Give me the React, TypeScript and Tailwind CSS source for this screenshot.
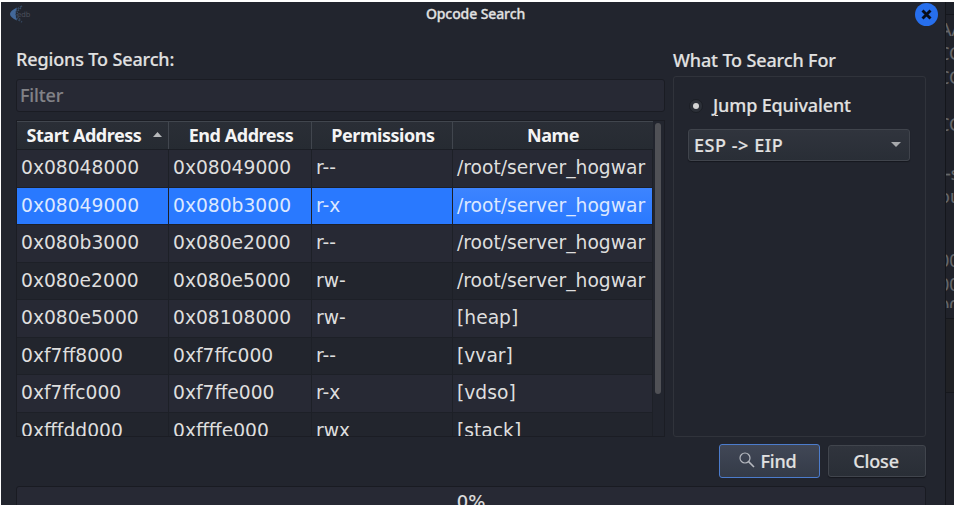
import type { ReactNode } from "react";

const regions = [
  ["0x08048000", "0x08049000", "r--", "/root/server_hogwar"],
  ["0x08049000", "0x080b3000", "r-x", "/root/server_hogwar"],
  ["0x080b3000", "0x080e2000", "r--", "/root/server_hogwar"],
  ["0x080e2000", "0x080e5000", "rw-", "/root/server_hogwar"],
  ["0x080e5000", "0x08108000", "rw-", "[heap]"],
  ["0xf7ff8000", "0xf7ffc000", "r--", "[vvar]"],
  ["0xf7ffc000", "0xf7ffe000", "r-x", "[vdso]"],
  ["0xfffdd000", "0xffffe000", "rwx", "[stack]"],
];
const selected = 1;
const columns = "grid grid-cols-[152px_143px_141px_200px]";

function Logo() {
  return (
    <svg className="mt-[3px] ml-[8px] h-[18px] w-[22px]" viewBox="0 0 22 18" fill="none">
      <path d="M13 1Q-1 9 13 17" stroke="#34475f" strokeWidth="1.8" strokeDasharray="2 1" />
      <path d="M8 2.5Q-6 9 8 15.5Q5 9 8 2.5Z" fill="#42689a" />
      <path d="M12 3Q4 9 12 15" stroke="#3b4d64" strokeWidth="1.2" strokeDasharray="1.5 1" />
      <text x="8" y="11.5" fill="#4b505b" fontSize="7.2" fontFamily="DejaVu Sans">edb</text>
    </svg>
  );
}

function HeaderCell({ children, last }: { children: ReactNode; last?: boolean }) {
  return (
    <div className={`flex items-center justify-center ${last ? "" : "border-r border-[#41464e]"}`}>{children}</div>
  );
}

function RegionsTable() {
  return (
    <div className="mt-[8px] flex h-[317px] w-[649px] overflow-hidden border border-[#1b1d24] bg-[#22252e]">
      <div className="w-[636px] shrink-0">
        <div className={`${columns} h-[29px] border-t border-b border-t-[#41464e] border-b-[#1b1e25] bg-linear-to-b from-[#2a2e36] to-[#262b32] font-['Noto_Sans',sans-serif] text-[18px] font-bold tracking-[-0.45px] text-[#f4f4f4]`}>
          <HeaderCell>
            <span className="mr-[12px] ml-[4px]">Start Address</span>
            <svg className="mb-[3px] h-[5px] w-[9px]" viewBox="0 0 9 5"><path d="M0 5L4.5 0L9 5Z" fill="#b7b9bb" /></svg>
          </HeaderCell>
          <HeaderCell><span className="ml-[2px]">End Address</span></HeaderCell>
          <HeaderCell><span className="ml-[2px]">Permissions</span></HeaderCell>
          <HeaderCell last>Name</HeaderCell>
        </div>
        {regions.map((row, i) => (
          <div key={i} className={`${columns} h-[37.5px] font-['DejaVu_Sans',sans-serif] text-[18.7px] leading-[35px] ${i === selected ? "text-[#dce8ff]" : "text-[#dedede]"}`}>
            {row.map((cell, j) => (
              <div key={j} className={`overflow-hidden border-r border-b border-[#1d2027] pl-[4px] whitespace-nowrap ${i === selected ? (j === 3 ? "bg-linear-to-b from-[#3d84ff] to-[#2979ff]" : "bg-[#2979ff]") : i % 2 === 0 ? "bg-[#272934]" : "bg-[#22252d]"}`}>{cell}</div>
            ))}
          </div>
        ))}
      </div>
      <div className="mt-[2px] ml-[2px] h-[271px] w-[6px] rounded-full bg-[#505156]" />
    </div>
  );
}

function BackgroundWindow() {
  return (
    <div className="relative h-[505px] w-[9px] shrink-0 overflow-hidden border-l border-[#14161b] bg-[#20222a] font-['Noto_Sans',sans-serif] text-[18px] leading-[24px] font-normal tracking-normal whitespace-nowrap text-[#65676b]">
      <div className="h-[13px] border-b border-[#15171d] bg-[#1e2129]" />
      <div className="absolute top-[15px] -left-[6px]">AA</div>
      <div className="absolute top-[39px] -left-[8px]">CC</div>
      <div className="absolute top-[63px] -left-[8px]">CC</div>
      <div className="absolute top-[110px] -left-[8px]">CC</div>
      <div className="absolute top-[159px] -left-[1px]">-s</div>
      <div className="absolute top-[182px] -left-[7px]">ou</div>
      <div className="absolute top-[246px] -left-[7px]">00</div>
      <div className="absolute top-[270px] -left-[7px]">00</div>
      <div className="absolute top-[292px] -left-[7px] h-[14px] overflow-hidden">00</div>
      <div className="absolute top-[316px] left-0 h-[75px] w-full border-y border-[#16181d] bg-[#202125]" />
    </div>
  );
}

export default function App() {
  return (
    <main className="flex h-[505px] w-[954px] overflow-hidden border-t-2 border-l border-white bg-[#22252e] font-['Noto_Sans',sans-serif] text-[18px] font-medium tracking-[-0.14px] text-[#e1e1e1] [-webkit-text-stroke:0.15px]">
      <section className="h-[503px] w-[944px] shrink-0">
        <header className="flex h-[42px] justify-between">
          <div className="w-[60px]"><Logo /></div>
          <h1 className="mt-[2px] ml-[4px] text-[14px] leading-[20px] font-medium tracking-[-0.1px] [-webkit-text-stroke:0.3px]">Opcode Search</h1>
          <button className="mt-[1px] mr-[7px] ml-[29px] flex size-[23px] items-center justify-center rounded-full bg-[#276fed]">
            <svg className="size-[11px]" viewBox="0 0 11 11"><path d="M1.5 1.5L9.5 9.5M9.5 1.5L1.5 9.5" stroke="#080d19" strokeWidth="2.9" /></svg>
          </button>
        </header>
        <div className="flex h-[395px] pl-[15px]">
          <div className="w-[649px]">
            <label className="block h-[35px] leading-[31px]">Regions To Search:</label>
            <input className="block h-[33px] w-[649px] rounded-[3px] border border-[#1a1c23] bg-[#272934] px-[3px] pb-px outline-none placeholder:text-[#828287]" placeholder="Filter" />
            <div className="tracking-normal [-webkit-text-stroke:0px]"><RegionsTable /></div>
          </div>
          <div className="ml-[8px] w-[253px]">
            <div className="h-[32px] leading-[32px]">What To Search For</div>
            <fieldset className="h-[361px] w-[253px] rounded-[3px] border border-[#30333b] px-[14px] pt-[15px]">
              <label className="flex h-[27px] items-center">
                <span className="mr-[9px] ml-px flex size-[14px] items-center justify-center rounded-full border border-[#1b1e25] bg-[#2c3038]"><span className="size-[6px] rounded-full bg-[#d5d5d5]" /></span>
                <span className="ml-px"><span className="underline decoration-1 underline-offset-[3px]">J</span>ump Equivalent</span>
              </label>
              <button className="mt-[10px] flex h-[32px] w-[222px] items-center justify-between rounded-[3px] border border-[#40444c] bg-linear-to-b from-[#30343d] to-[#292e36] pr-[8px] pl-[5px] shadow-[0_1px_1px_#16181e]">
                <span className="tracking-[0.55px]">ESP -&gt; EIP</span>
                <svg className="mb-px h-[5px] w-[10px]" viewBox="0 0 10 5"><path d="M0 0H10L5 5Z" fill="#a7a9ac" /></svg>
              </button>
            </fieldset>
          </div>
        </div>
        <div className="flex h-[47px] justify-end gap-[8px] pt-[5px] pr-[19px]">
          <button className="flex h-[34px] w-[101px] items-center justify-center rounded-[3px] border border-[#4c7ccc] bg-linear-to-b from-[#414756] to-[#343b48] pr-[3px]">
            <svg className="mr-[5px] mb-[2px] size-[16px]" viewBox="0 0 16 16" fill="none" stroke="#b5b8bf"><circle cx="6" cy="6" r="5" strokeWidth="1.2" /><path d="M9.6 9.6L15 15" strokeWidth="1.6" /></svg>
            Find
          </button>
          <button className="mt-px flex h-[32px] w-[98px] items-center justify-center rounded-[3px] border border-[#41454d] bg-linear-to-b from-[#30343d] to-[#292e36] pr-[2px] shadow-[0_1px_1px_#16181e]">Close</button>
        </div>
        <div className="ml-[15px] h-[30px] w-[910px] rounded-t-[3px] border border-[#191b22] bg-[#272934] text-center font-['DejaVu_Sans',sans-serif] text-[18px] leading-[30px]">0%</div>
      </section>
      <BackgroundWindow />
    </main>
  );
}
